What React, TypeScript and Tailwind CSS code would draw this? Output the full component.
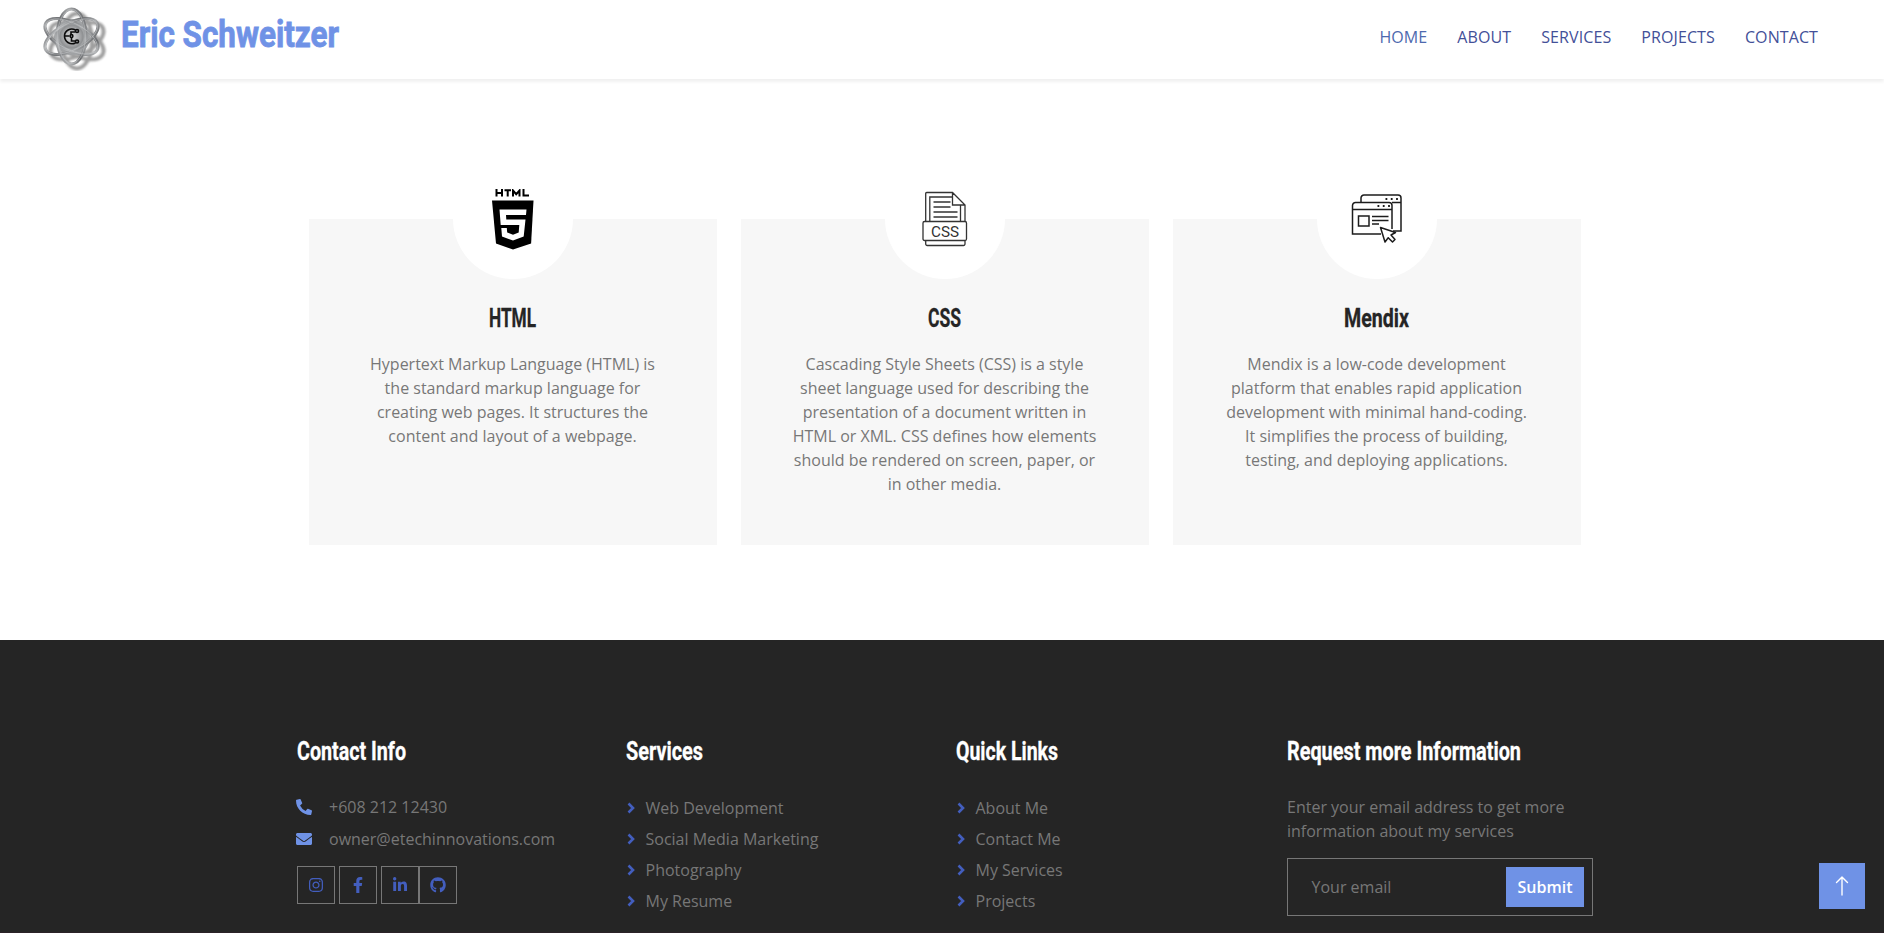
import { FaPhoneAlt, FaEnvelope, FaInstagram, FaFacebookF, FaLinkedinIn, FaGithub } from "react-icons/fa";
import { BsArrowUp } from "react-icons/bs";
import type { ReactNode } from "react";

function Heading({ text, className, length, size, y, height, width, stroke = 0.3 }: { text: string; className: string; length: number; size: number; y: number; height: number; width: number; stroke?: number }) {
  return (
    <svg width={width} height={height} className={`shrink-0 overflow-visible ${className}`} role="heading" aria-label={text}>
      <text x="0" y={y} fontSize={size} textLength={length} lengthAdjust="spacingAndGlyphs" fill="currentColor" stroke="currentColor" strokeWidth={stroke} fontWeight="700" fontFamily="Roboto, sans-serif">
        {text}
      </text>
    </svg>
  );
}

function Logo() {
  const angles = [30, 90, 150];
  return (
    <svg width="66" height="66" viewBox="0 0 66 66" className="block shrink-0">
      <defs>
        <linearGradient id="metal" x1="0" y1="0" x2="1" y2="1">
          <stop offset="0" stopColor="#505255" />
          <stop offset="0.3" stopColor="#a9abad" />
          <stop offset="0.55" stopColor="#6b6d70" />
          <stop offset="0.8" stopColor="#b4b6b8" />
          <stop offset="1" stopColor="#5d5f62" />
        </linearGradient>
        <radialGradient id="core">
          <stop offset="0" stopColor="#d8d8d8" />
          <stop offset="0.6" stopColor="#b0b1b3" />
          <stop offset="1" stopColor="#8b8d8f" />
        </radialGradient>
        <filter id="soft" x="-20%" y="-20%" width="140%" height="140%">
          <feGaussianBlur stdDeviation="0.8" />
        </filter>
      </defs>
      <g fill="none" stroke="#868686" strokeWidth="3.800" opacity="0.8" filter="url(#soft)" transform="translate(35 36) scale(1.070 1)">
        {angles.map((a) => (
          <ellipse key={a} rx="27.500" ry="14" transform={`rotate(${a})`} />
        ))}
      </g>
      <circle cx="30" cy="32" r="18" fill="#a0a2a4" />
      <g fill="none" stroke="url(#metal)" strokeWidth="3" transform="translate(29.500 31.500) scale(1.070 1)">
        {angles.map((a) => (
          <ellipse key={a} rx="27.500" ry="13.500" transform={`rotate(${a})`} />
        ))}
      </g>
      <g fill="none" stroke="#c9cacc" strokeWidth="0.500" transform="translate(29.500 31.500) scale(1.070 1)">
        {angles.map((a) => (
          <ellipse key={a} rx="27" ry="13" transform={`rotate(${a})`} />
        ))}
      </g>
      <circle cx="29.500" cy="31.500" r="12" fill="url(#core)" />
      <g fill="none" stroke="#0c0c0c" strokeWidth="1.600">
        <path d="M33.500 25c-5-2.500-11 .5-11 6s5.500 9.500 11 7M22.500 31h5M29 29.500V27h4M29.500 32.500V36h3.500" />
        <circle cx="35" cy="26" r="1.500" />
        <circle cx="29.500" cy="31" r="1.400" />
        <circle cx="35" cy="36.500" r="1.500" />
      </g>
    </svg>
  );
}

function Html5() {
  return (
    <svg width="44" height="62" viewBox="0 0 44 62" className="block">
      <path fill="none" stroke="#000" strokeWidth="2" d="M5.500 0v7.500M5.500 3.900h5.500M11 0v7.500M13.500 1.200h6.500M16.700 1.200v6.300M22 7.500V1.500l3.200 3.700 3.300-3.700v6M32.500 0v6.500H38" />
      <path fill="#000" d="M1 11.500h41.500l-2.400 43L22 60.500 5 54.500z" />
      <path fill="#fff" d="M8.500 20.500h27l-.5 5.500H15l.3 4.500H34.500L32.700 47.500 22 51.500 11 47.500l-.7-8.500h5.500l.4 4.500 5.800 2.300 5.700-2.300.6-7.500H9.700z" />
    </svg>
  );
}

function CssIcon() {
  return (
    <svg width="46" height="56" viewBox="0 0 46 56" className="block" fill="none" stroke="#333" strokeWidth="1.300">
      <path d="M3.700 30V2.500a1 1 0 0 1 1-1H30.500L43 14v16M30.500 1.500V14H43M7.800 30V6h22.700M38.500 14v16M11.500 11h17M11.500 16h17M11.500 21h24M11.500 26h24" />
      <rect x="1" y="30.500" width="43.500" height="19" rx="1.500" />
      <path d="M3.700 50v3a1.500 1.500 0 0 0 1.500 1.500h36.300A1.500 1.500 0 0 0 43 53v-3" />
      <text x="9" y="45.500" fontSize="15.500" textLength="28" lengthAdjust="spacingAndGlyphs" fill="#333" stroke="none" fontFamily="Roboto, sans-serif">CSS</text>
    </svg>
  );
}

function BrowserIcon() {
  return (
    <svg width="52" height="50" viewBox="0 0 52 50" className="block" fill="none" stroke="#1c1c1c" strokeWidth="1.500">
      <path d="M10 8V4a3 3 0 0 1 3-3h34a3 3 0 0 1 3 3v33h-8M41 8.500h9" />
      <path d="M30 40H1.500V11.500a3 3 0 0 1 3-3H38a3 3 0 0 1 3 3V35M1.500 15.500H41" />
      <rect x="7.500" y="22" width="10.500" height="10" />
      <path d="M21 22.500h16.500M21 26.500h16.500M21 30h7" />
      <path fill="#fff" strokeLinejoin="round" d="M29.500 33.500 34 48l3.200-4.300 4.300 4.300 2.500-2.500-4-4.500 4.500-2.500z" />
      <path strokeWidth="1.800" strokeDasharray="1.800 3.500" d="M34.500 5h13M26.500 12h13" />
    </svg>
  );
}

type Card = { title: string; length: number; icon: ReactNode; pad: string; lines: string[] };

const cards: Card[] = [
  {
    title: "HTML",
    length: 47,
    icon: <Html5 />,
    pad: "pt-[30px]",
    lines: ["Hypertext Markup Language (HTML) is", "the standard markup language for", "creating web pages. It structures the", "content and layout of a webpage."],
  },
  {
    title: "CSS",
    length: 33,
    icon: <CssIcon />,
    pad: "pt-[32px]",
    lines: ["Cascading Style Sheets (CSS) is a style", "sheet language used for describing the", "presentation of a document written in", "HTML or XML. CSS defines how elements", "should be rendered on screen, paper, or", "in other media."],
  },
  {
    title: "Mendix",
    length: 65,
    icon: <BrowserIcon />,
    pad: "pt-[35px]",
    lines: ["Mendix is a low-code development", "platform that enables rapid application", "development with minimal hand-coding.", "It simplifies the process of building,", "testing, and deploying applications."],
  },
];

function LinkList({ items }: { items: string[] }) {
  return (
    <ul className="mt-[26px]">
      {items.map((item) => (
        <li key={item} className="flex h-[31px] items-center">
          <svg width="8" height="12" viewBox="0 0 8 12" className="mr-[10.500px] ml-px shrink-0" fill="none" stroke="#435ebe" strokeWidth="2.600">
            <path d="M1.500 1.500 6 6l-4.500 4.500" />
          </svg>
          {item}
        </li>
      ))}
    </ul>
  );
}

const socials = [
  { Icon: FaInstagram, gap: "mr-1" },
  { Icon: FaFacebookF, gap: "mr-1" },
  { Icon: FaLinkedinIn, gap: "" },
  { Icon: FaGithub, gap: "" },
];

export default function App() {
  return (
    <div className="relative h-[933px] w-[1884px] overflow-hidden bg-white font-['Open_Sans',sans-serif] text-[16px] leading-6 text-[#777]">
      <header className="flex h-[79px] justify-between pr-[66px] pl-[42px] shadow-[0_3px_3px_rgba(0,0,0,0.06)]">
        <div className="flex pt-[5px]">
          <Logo />
          <Heading text="Eric Schweitzer" width={230} height={56} size={36} y={42} length={218} stroke={0.8} className="ml-[13px] text-[#6f92e6]" />
        </div>
        <nav className="flex gap-[30px] pt-[25px] tracking-[0.1px] text-[#435098]">
          <a className="text-[#4d69ae]">HOME</a>
          <a>ABOUT</a>
          <a>SERVICES</a>
          <a>PROJECTS</a>
          <a>CONTACT</a>
        </nav>
      </header>

      <main className="flex h-[561px] gap-[24px] pt-[140px] pl-[308.500px]">
        {cards.map((card) => (
          <section key={card.title} className="flex h-[326px] w-[408px] shrink-0 flex-col items-center bg-[#f7f7f7]">
            <div className={`-mt-[60px] flex h-[120px] w-[120px] shrink-0 justify-center rounded-full bg-white ${card.pad}`}>{card.icon}</div>
            <Heading text={card.title} width={card.length} height={34} size={25.500} y={27} length={card.length} className="mt-[21px] text-[#252525]" />
            <p className="mt-[18px] text-center whitespace-nowrap">
              {card.lines.map((line) => (
                <span key={line} className="block">
                  {line}
                </span>
              ))}
            </p>
          </section>
        ))}
      </main>

      <footer className="flex h-[293px] border-b border-[#2b2228] bg-[#252525] pt-[96px] pl-[296px]">
        <div className="w-[330px]">
          <Heading text="Contact Info" width={120} height={30} size={25.500} y={24} length={109} className="ml-[0.500px] block text-white" />
          <div className="mt-[29px] flex items-center">
            <FaPhoneAlt size={16} className="mr-[17px] text-[#6f92e6]" />
            +608 212 12430
          </div>
          <div className="mt-2 flex items-center">
            <FaEnvelope size={16} className="mr-[17px] text-[#6f92e6]" />
            owner@etechinnovations.com
          </div>
          <div className="mt-[15px] ml-px flex">
            {socials.map(({ Icon, gap }, i) => (
              <span key={i} className={`flex h-[38px] w-[38px] items-center justify-center border border-[#777] text-[#435ebe] ${gap}`}>
                <Icon size={16} />
              </span>
            ))}
          </div>
        </div>
        <div className="w-[330px]">
          <Heading text="Services" width={120} height={30} size={25.500} y={24} length={77} className="block text-white" />
          <LinkList items={["Web Development", "Social Media Marketing", "Photography", "My Resume"]} />
        </div>
        <div className="w-[330px]">
          <Heading text="Quick Links" width={120} height={30} size={25.500} y={24} length={102} className="block text-white" />
          <LinkList items={["About Me", "Contact Me", "My Services", "Projects"]} />
        </div>
        <div className="w-[306px] pl-px">
          <Heading text="Request more Information" width={250} height={30} size={25.500} y={24} length={234} className="block text-white" />
          <p className="mt-[29px]">
            Enter your email address to get more
            <br />
            information about my services
          </p>
          <form className="mt-[15px] flex h-[58px] w-[306px] items-center justify-between border border-[#777] pr-2 pl-[23.500px]">
            <span>Your email</span>
            <button type="button" className="h-10 w-[78px] bg-[#6f92e6] font-semibold text-white">
              Submit
            </button>
          </form>
        </div>
      </footer>

      <button type="button" aria-label="Back to top" className="absolute top-[863px] left-[1819px] flex h-[46px] w-[46px] items-center justify-center bg-[#6f92e6] text-white">
        <BsArrowUp size={22} />
      </button>
    </div>
  );
}
